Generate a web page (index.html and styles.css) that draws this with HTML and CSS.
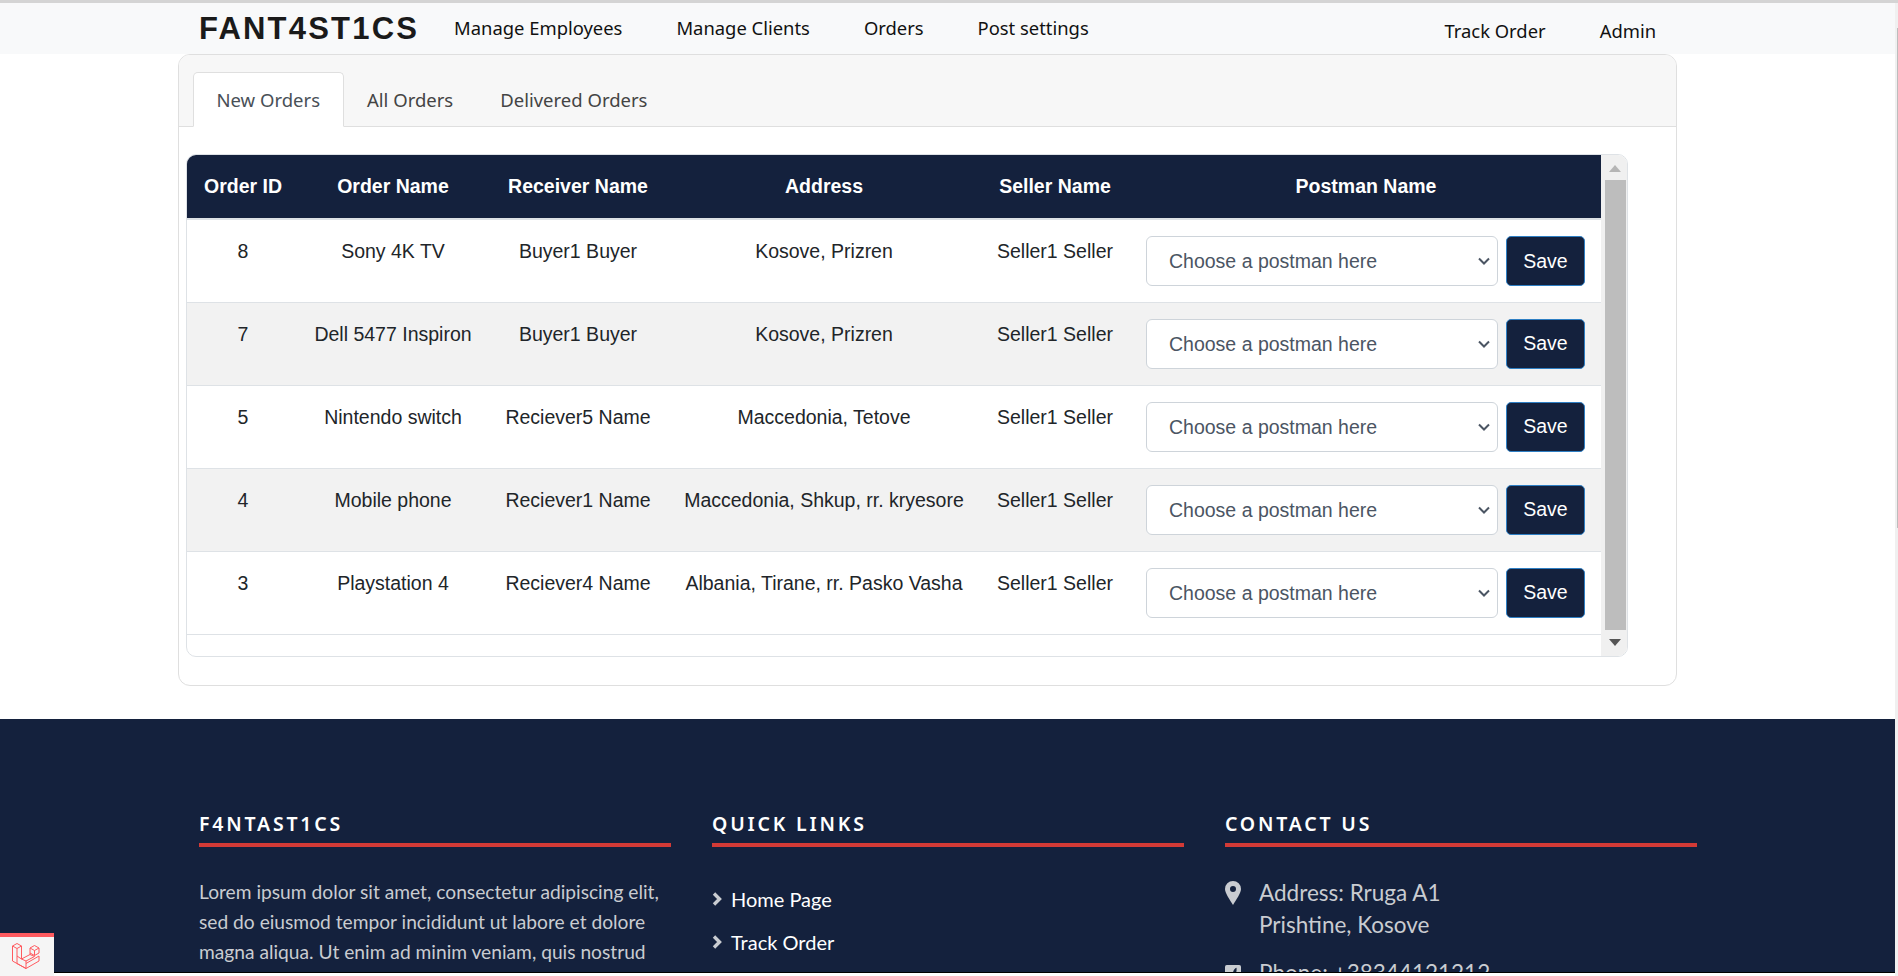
FILE: index.html
```html
<!DOCTYPE html>
<html lang="en">
<head>
    <meta charset="UTF-8">
    <title>F4ntast1cs - Orders</title>
    <link rel="stylesheet" href="styles.css">
</head>
<body>
    <div class="screen">
        <div class="page">
            <header class="topbar">
                <a class="brand">FANT4ST1CS</a>
                <nav class="nav-left">
                    <a>Manage Employees</a>
                    <a>Manage Clients</a>
                    <a>Orders</a>
                    <a>Post settings</a>
                </nav>
                <nav class="nav-right">
                    <a>Track Order</a>
                    <a>Admin</a>
                </nav>
            </header>

            <main class="card">
                <div class="card-header">
                    <ul class="tabs">
                        <li class="tab active">New Orders</li>
                        <li class="tab">All Orders</li>
                        <li class="tab">Delivered Orders</li>
                    </ul>
                </div>
                <div class="card-body">
                    <div class="table-box">
                        <div class="table-wrap">
                            <table class="orders">
                                <thead>
                                    <tr>
                                        <th class="col-id">Order ID</th>
                                        <th class="col-name">Order Name</th>
                                        <th class="col-receiver">Receiver Name</th>
                                        <th class="col-address">Address</th>
                                        <th class="col-seller">Seller Name</th>
                                        <th>Postman Name</th>
                                    </tr>
                                </thead>
                                <tbody>
                                    <tr>
                                        <td>8</td>
                                        <td>Sony 4K TV</td>
                                        <td>Buyer1 Buyer</td>
                                        <td>Kosove, Prizren</td>
                                        <td>Seller1 Seller</td>
                                        <td class="assign">
                                            <form class="assign-form">
                                                <select class="postman"><option>Choose a postman here</option></select>
                                                <button type="button" class="save">Save</button>
                                            </form>
                                        </td>
                                    </tr>
                                    <tr>
                                        <td>7</td>
                                        <td>Dell 5477 Inspiron</td>
                                        <td>Buyer1 Buyer</td>
                                        <td>Kosove, Prizren</td>
                                        <td>Seller1 Seller</td>
                                        <td class="assign">
                                            <form class="assign-form">
                                                <select class="postman"><option>Choose a postman here</option></select>
                                                <button type="button" class="save">Save</button>
                                            </form>
                                        </td>
                                    </tr>
                                    <tr>
                                        <td>5</td>
                                        <td>Nintendo switch</td>
                                        <td>Reciever5 Name</td>
                                        <td>Maccedonia, Tetove</td>
                                        <td>Seller1 Seller</td>
                                        <td class="assign">
                                            <form class="assign-form">
                                                <select class="postman"><option>Choose a postman here</option></select>
                                                <button type="button" class="save">Save</button>
                                            </form>
                                        </td>
                                    </tr>
                                    <tr>
                                        <td>4</td>
                                        <td>Mobile phone</td>
                                        <td>Reciever1 Name</td>
                                        <td>Maccedonia, Shkup, rr. kryesore</td>
                                        <td>Seller1 Seller</td>
                                        <td class="assign">
                                            <form class="assign-form">
                                                <select class="postman"><option>Choose a postman here</option></select>
                                                <button type="button" class="save">Save</button>
                                            </form>
                                        </td>
                                    </tr>
                                    <tr>
                                        <td>3</td>
                                        <td>Playstation 4</td>
                                        <td>Reciever4 Name</td>
                                        <td>Albania, Tirane, rr. Pasko Vasha</td>
                                        <td>Seller1 Seller</td>
                                        <td class="assign">
                                            <form class="assign-form">
                                                <select class="postman"><option>Choose a postman here</option></select>
                                                <button type="button" class="save">Save</button>
                                            </form>
                                        </td>
                                    </tr>
                                </tbody>
                            </table>
                        </div>
                        <div class="scrollbar">
                            <span class="arrow-up"></span>
                            <span class="thumb"></span>
                            <span class="arrow-down"></span>
                        </div>
                    </div>
                </div>
            </main>

            <footer class="footer">
                <div class="footer-grid">
                    <section>
                        <h4>F4NTAST1CS</h4>
                        <p class="about">Lorem ipsum dolor sit amet, consectetur adipiscing elit, sed do eiusmod tempor incididunt ut labore et dolore magna aliqua. Ut enim ad minim veniam, quis nostrud</p>
                    </section>
                    <section>
                        <h4>QUICK LINKS</h4>
                        <ul class="links">
                            <li><svg class="chevron" viewBox="0 0 10 14"><path d="M2 1.5 7.5 7 2 12.5" fill="none" stroke="#c9ccd1" stroke-width="3.4"/></svg>Home Page</li>
                            <li><svg class="chevron" viewBox="0 0 10 14"><path d="M2 1.5 7.5 7 2 12.5" fill="none" stroke="#c9ccd1" stroke-width="3.4"/></svg>Track Order</li>
                        </ul>
                    </section>
                    <section>
                        <h4>CONTACT US</h4>
                        <div class="contact contact-first">
                            <svg class="contact-icon" viewBox="0 0 16 24"><path fill-rule="evenodd" d="M8 0a8 8 0 0 1 8 8c0 4-5 11-8 16C5 19 0 12 0 8a8 8 0 0 1 8-8Zm0 5a3 3 0 1 0 0 6 3 3 0 0 0 0-6Z" fill="#c9ccd1"/></svg>
                            <p>Address: Rruga A1<br>Prishtine, Kosove</p>
                        </div>
                        <div class="contact">
                            <svg class="contact-icon" viewBox="0 0 18 18"><rect width="18" height="18" rx="2" fill="#c9ccd1"/><path d="M13 3c-3 1-5 5-4 11l3-1c-.5-2-.5-4 1-6Z" fill="#14213d"/></svg>
                            <p>Phone: +38344121212</p>
                        </div>
                    </section>
                </div>
            </footer>

            <div class="debug-tab">
                <svg viewBox="0 0 28 27" width="28" height="27">
                    <path d="M.5 4 5 1.5 9.5 4 5 6.5ZM.5 4v15L14 26.5 27 19v-5M5 6.5v15l9 5M9.5 4v13M9.5 17l8.5-4.500 4.500 2L14 19ZM14 19v7.500M5 14l4.500 3M18 6l4.500-2.500L27 6v5l-4.500 2.500L18 11ZM18 6l4.500 2.500L27 6M22.500 8.500v5M18 11v1.500M27 14l-13 7.500" fill="none" stroke="#ff5a5f" stroke-width="1"/>
                </svg>
            </div>
        </div>
        <div class="page-scroll"><span></span></div>
    </div>
</body>
</html>
```

FILE: styles.css
```css
* {
    box-sizing: border-box;
}
html, body {
    margin: 0;
    height: 976px;
    overflow: hidden;
}
body {
    font-family: 'Liberation Sans', Arial, sans-serif;
    font-size: 19.5px;
    color: #212529;
    background: #fff;
}
.screen {
    display: flex;
    height: 976px;
    border-top: 3px solid #d4d4d4;
}
.page {
    flex: 1;
    min-width: 0;
    height: 973px;
    overflow: hidden;
}
.page-scroll {
    width: 3px;
    background: #f0f0f0;
    padding-top: 25px;
}
.page-scroll span {
    display: block;
    width: 1px;
    height: 500px;
    margin-left: 2px;
    background: #bdbdbd;
}

/* top bar */
.topbar {
    display: flex;
    height: 51px;
    padding-left: 199px;
    padding-right: 239px;
    background: #f8f9fa;
    align-items: center;
    font-family: 'Noto Sans', sans-serif;
    font-size: 18.4px;
    color: #111;
}
.brand {
    font-family: 'Liberation Sans', sans-serif;
    font-weight: bold;
    font-size: 31px;
    letter-spacing: 2.2px;
    margin-right: 35px;
    color: #1a1a1a;
}
.nav-left {
    display: flex;
    gap: 54px;
    padding-bottom: 2px;
}
.nav-right {
    display: flex;
    gap: 54px;
    margin-left: auto;
    padding-top: 3px;
}

/* card */
.card {
    width: 1499px;
    height: 632px;
    margin-left: 178px;
    border: 1px solid #dfdfdf;
    border-radius: 12px;
    overflow: hidden;
}
.card-header {
    height: 72px;
    padding: 17px 14px 0;
    background: #f7f7f7;
    border-bottom: 1px solid #dfdfdf;
}
.tabs {
    display: flex;
    list-style: none;
    margin: 0;
    padding: 0;
    font-family: 'Noto Sans', sans-serif;
    font-size: 18.5px;
    color: #444;
}
.tab {
    height: 55px;
    padding: 0 22.5px;
    line-height: 53px;
    border: 1px solid transparent;
}
.tab.active {
    background: #fff;
    color: #495057;
    border-color: #dfdfdf #dfdfdf #fff;
    border-radius: 5px 5px 0 0;
}
.card-body {
    padding: 27px 0 0 7px;
}

/* orders table */
.table-box {
    display: flex;
    width: 1442px;
    height: 503px;
    border: 1px solid #dee2e6;
    border-radius: 10px;
    overflow: hidden;
}
.table-wrap {
    width: 1414px;
}
.orders {
    width: 100%;
    table-layout: fixed;
    border-collapse: collapse;
}
.orders th {
    height: 64px;
    background: #14213d;
    color: #fff;
    font-weight: bold;
    text-align: center;
    border-bottom: 2px solid #dee2e6;
}
.col-id { width: 112px; }
.col-name { width: 188px; }
.col-receiver { width: 182px; }
.col-address { width: 310px; }
.col-seller { width: 152px; }
.orders td {
    height: 83px;
    padding: 21px 4px 0;
    text-align: center;
    vertical-align: top;
    line-height: 21px;
    border-bottom: 1px solid #dee2e6;
}
.orders tbody tr:nth-child(even) {
    background: #f2f2f2;
}
.orders td.assign {
    padding: 16px 16px 0 15px;
}
.assign-form {
    display: flex;
    gap: 8px;
    margin: 0;
}
.postman {
    flex: 1;
    height: 50px;
    min-width: 0;
    padding: 0 30px 0 22px;
    font-family: 'Liberation Sans', sans-serif;
    font-size: 19.5px;
    color: #4b5563;
    appearance: none;
    background: #fff url("data:image/svg+xml,%3Csvg xmlns='http://www.w3.org/2000/svg' width='12' height='8' viewBox='0 0 12 8'%3E%3Cpath d='M1 1.5 6 6.5 11 1.5' fill='none' stroke='%234b5563' stroke-width='2'/%3E%3C/svg%3E") no-repeat right 7px center;
    border: 1px solid #ced4da;
    border-radius: 6px;
}
.save {
    width: 79px;
    height: 50px;
    padding: 0;
    font-family: 'Liberation Sans', sans-serif;
    font-size: 19.5px;
    color: #fff;
    background: #14213d;
    border: 1px solid #2e7fc4;
    border-radius: 5px;
}

/* fake scrollbar of the table */
.scrollbar {
    display: flex;
    flex-direction: column;
    align-items: center;
    width: 26px;
    padding-left: 2px;
    background: #f0f0f0;
}
.thumb {
    width: 21px;
    height: 450px;
    margin: 8px 0 9px;
    background: #bdbdbd;
}
.arrow-up {
    margin-top: 10px;
    border: 5px solid transparent;
    border-top: 0;
    border-bottom: 7px solid #b5b5b5;
    border-left-width: 6px;
    border-right-width: 6px;
}
.arrow-down {
    border: 5px solid transparent;
    border-bottom: 0;
    border-top: 7px solid #555;
    border-left-width: 6px;
    border-right-width: 6px;
}

/* footer */
.footer {
    height: 254px;
    margin-top: 33px;
    padding: 91px 0 0 199px;
    background: #14213d;
    border-bottom: 1px solid #000;
    overflow: hidden;
    font-family: 'Lato', sans-serif;
    color: #c9ccd1;
}
.footer-grid {
    display: grid;
    grid-template-columns: 472px 472px 472px;
    gap: 41px;
}
.footer h4 {
    height: 37px;
    margin: 0 0 30px;
    font-family: 'Noto Sans', sans-serif;
    font-size: 19.5px;
    font-weight: 600;
    letter-spacing: 2.8px;
    line-height: 28px;
    color: #fff;
    border-bottom: 4px solid #d33a36;
}
.about {
    margin: 1px 0 0;
    font-size: 19.2px;
    line-height: 30px;
}
.links {
    list-style: none;
    margin: 0;
    padding: 0;
    font-size: 20px;
    color: #fff;
}
.links li {
    display: flex;
    align-items: center;
    height: 43px;
}
.chevron {
    width: 10px;
    height: 14px;
    margin-right: 9px;
}
.contact {
    display: flex;
    gap: 18px;
    margin-bottom: 16px;
    font-size: 22.5px;
}
.contact-first {
    margin-top: 2px;
}
.contact p {
    margin: 0;
    line-height: 32px;
}
.contact-icon {
    width: 16px;
    height: 24px;
    margin-top: 4px;
}

/* laravel debug bar tab */
.debug-tab {
    position: fixed;
    left: 0;
    bottom: 0;
    width: 54px;
    height: 43px;
    padding: 5px 0 0 12px;
    background: #f5f5f5;
    border-top: 4px solid #ff5a5f;
}
```
